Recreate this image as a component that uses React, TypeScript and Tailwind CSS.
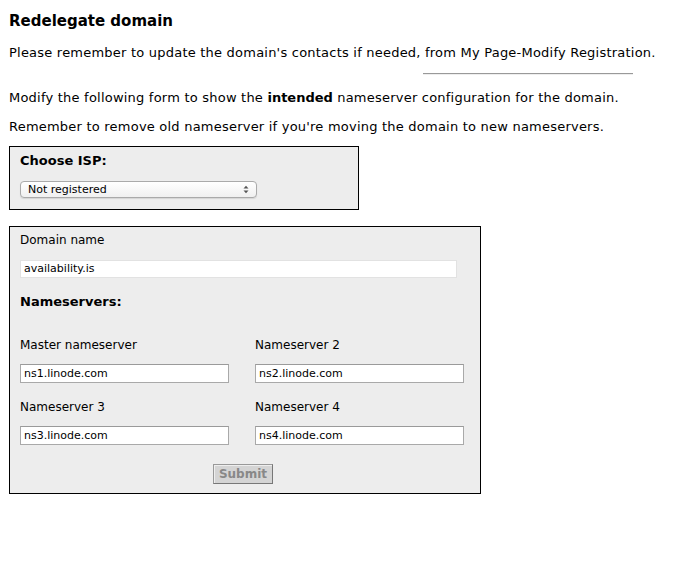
import React from "react";

const inputCls =
  "block h-[19px] bg-white border border-[#a9a9a9] border-t-[#9a9a9a] px-[3px] text-[11px] text-black outline-none";

export default function App() {
  return (
    <div className="w-[684px] h-[577px] bg-white text-black font-['DejaVu_Sans',Verdana,sans-serif] text-[13px] leading-[16px] px-[9px] pt-[12px]">
      <h1 className="text-[15px] leading-[19px] font-bold">Redelegate domain</h1>
      <div className="tracking-[0.22px]">
        <p className="mt-[14px]">
          Please remember to update the domain's contacts if needed, from My Page-Modify Registration.
        </p>
        <div className="mt-[12px] ml-[414px] w-[210px] h-[2px] border-t border-[#999] border-b border-b-[#eee]" />
        <p className="mt-[15px]">
          Modify the following form to show the <b className="tracking-normal">intended</b> nameserver configuration for the domain.
        </p>
        <p className="mt-[13px]">
          Remember to remove old nameserver if you're moving the domain to new nameservers.
        </p>
      </div>

      <div className="mt-[11px] w-[350px] h-[64px] border border-black bg-[#ededed] px-[10px] pt-[5px]">
        <div className="font-bold text-[13px] leading-[17px]">Choose ISP:</div>
        <div className="mt-[12px] w-[237px] h-[17px] rounded-[4px] border border-[#aaa] bg-gradient-to-b from-white to-[#f0f0f0] shadow-[0_1px_1px_rgba(0,0,0,0.1)] flex items-center justify-between pl-[7px] pr-[7px] text-[11px]">
          <span>Not registered</span>
          <svg width="6" height="9" viewBox="0 0 6 9">
            <path d="M0.5 3.5 L3 0.8 L5.5 3.5 Z" fill="#555" />
            <path d="M0.5 5.5 L3 8.2 L5.5 5.5 Z" fill="#555" />
          </svg>
        </div>
      </div>

      <div className="mt-[16px] w-[472px] h-[268px] border border-black bg-[#ededed] px-[10px] pt-[5px] text-[12px]">
        <div>Domain name</div>
        <div className="mt-[12px] w-[437px] h-[18px] bg-white border border-[#e2e2e2] px-[3px] text-[11px] leading-[16px]">
          availability.is
        </div>
        <div className="mt-[15px] font-bold text-[13px] leading-[17px]">Nameservers:</div>
        <div className="mt-[27px] grid grid-cols-[235px_210px] gap-y-[16px]">
          {[
            ["Master nameserver", "ns1.linode.com"],
            ["Nameserver 2", "ns2.linode.com"],
            ["Nameserver 3", "ns3.linode.com"],
            ["Nameserver 4", "ns4.linode.com"],
          ].map(([label, val]) => (
            <div key={label}>
              <div>{label}</div>
              <input readOnly value={val} className={inputCls + " mt-[11px] w-[209px]"} />
            </div>
          ))}
        </div>
        <div className="mt-[19px] flex justify-center pr-[4px]">
          <button className="w-[60px] h-[20px] border border-[#777] border-t-[#999] border-l-[#999] bg-[#d4d4d4] text-[#888] font-bold text-[12px] leading-[16px] shadow-[inset_1px_1px_0_#eee]">
            Submit
          </button>
        </div>
      </div>
    </div>
  );
}
